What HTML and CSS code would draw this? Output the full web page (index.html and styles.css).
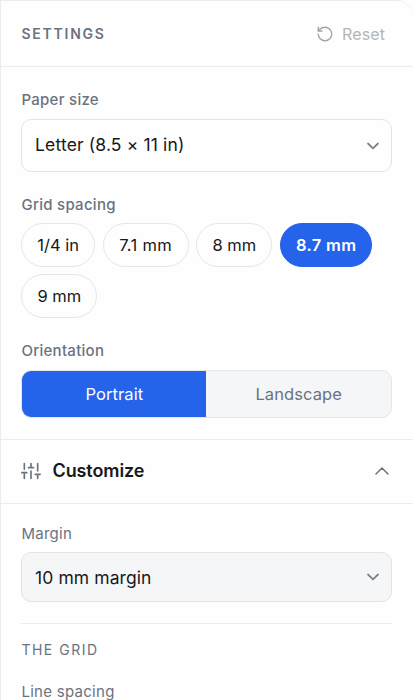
FILE: index.html
```html
<!DOCTYPE html>
<html lang="en">
<head>
<meta charset="utf-8">
<title>Settings</title>
<link rel="stylesheet" href="styles.css">
</head>
<body>
<aside class="panel">
  <header class="panel-header">
    <h2 class="panel-title">SETTINGS</h2>
    <button class="reset" type="button">
      <svg class="reset-icon" viewBox="0 0 24 24"><path d="M3 12a9 9 0 1 0 9-9 9.75 9.75 0 0 0-6.74 2.74L3 8"/><path d="M3 3v5h5"/></svg>
      <span>Reset</span>
    </button>
  </header>
  <section class="basics">
    <div class="label">Paper size</div>
    <div class="select select-paper"><span class="paper-value">Letter (8.5 × 11 in)</span>
      <svg class="chevron" viewBox="0 0 12 8"><path d="M1 1.5 6 6.3 11 1.5"/></svg>
    </div>
    <div class="label">Grid spacing</div>
    <div class="chips">
      <button class="chip chip-quarter" type="button">1/4 in</button>
      <button class="chip chip-71" type="button">7.1 mm</button>
      <button class="chip chip-8" type="button">8 mm</button>
      <button class="chip chip-active" type="button">8.7 mm</button>
      <button class="chip chip-9" type="button">9 mm</button>
    </div>
    <div class="label">Orientation</div>
    <div class="segments">
      <button class="segment segment-active" type="button">Portrait</button>
      <button class="segment" type="button">Landscape</button>
    </div>
  </section>
  <div class="customize">
    <svg class="sliders" viewBox="0 0 24 24"><path d="M4 21v-7M4 10V3M12 21v-9M12 8V3M20 21v-5M20 12V3M1 14h6M9 8h6M17 16h6"/></svg>
    <h3 class="customize-title">Customize</h3>
    <svg class="caret" viewBox="0 0 14 8"><path d="M1 7 7 1l6 6"/></svg>
  </div>
  <section class="details">
    <div class="label label-light">Margin</div>
    <div class="select select-margin"><span class="margin-value">10 mm margin</span>
      <svg class="chevron" viewBox="0 0 12 8"><path d="M1 1.5 6 6.3 11 1.5"/></svg>
    </div>
    <h4 class="group-title">THE GRID</h4>
    <div class="label label-light">Line spacing</div>
  </section>
</aside>
</body>
</html>
```
FILE: styles.css
```css
* { box-sizing: border-box; }
html, body { margin: 0; height: 700px; overflow: hidden; background: #fefefe; }
body { font-family: Inter, "Liberation Sans", sans-serif; color: #18181b; }
button { font: inherit; margin: 0; cursor: pointer; }
h2, h3, h4 { margin: 0; }
svg { fill: none; stroke: currentColor; stroke-linecap: round; stroke-linejoin: round; flex: none; }

.panel {
  height: 700px;
  overflow: hidden;
  border: 1px solid #ececee;
  border-right: 0;
  border-bottom: 0;
  border-top-right-radius: 16px;
  background: #fefefe;
}
.panel-header {
  height: 66px;
  padding: 0 28px 0 20.5px;
  display: flex;
  align-items: center;
  justify-content: space-between;
  border-bottom: 1px solid #ececee;
}
.panel-title { font-size: 14px; font-weight: 600; letter-spacing: 1.75px; color: #6b7280; }
.reset {
  display: flex;
  align-items: center;
  gap: 8px;
  padding: 0;
  border: 0;
  background: none;
  font-size: 16px;
  letter-spacing: .1px;
  color: #b4b5b9;
}
.reset-icon { width: 18px; height: 18px; stroke-width: 1.8; color: #a3a4a6; }

.basics { height: 372px; padding: 23px 21px 0 20.4px; }
.label { height: 20px; line-height: 20px; font-size: 15px; font-weight: 500; letter-spacing: .28px; color: #6b7280; }
.label-light { font-weight: 400; }
.select {
  display: flex;
  align-items: center;
  justify-content: space-between;
  padding: 0 12.5px 0 12.7px;
  border: 1px solid #e4e4e7;
  border-radius: 10px;
  font-size: 17.5px;
}
.paper-value { padding-bottom: 2px; letter-spacing: .15px; }
.margin-value { letter-spacing: .08px; }
.chevron { width: 12px; height: 8px; stroke-width: 1.8; color: #7c818a; }
.select-paper { height: 53px; margin: 9px 0 23px; }
.chips { display: flex; flex-wrap: wrap; gap: 7px 7.7px; margin: 8px 0 23px; }
.chip {
  height: 44px;
  padding: 0;
  border: 1px solid #e6e6e9;
  border-radius: 22px;
  background: #fefefe;
  color: #18181b;
  font-size: 16.5px;
}
.chip-quarter { width: 73.5px; }
.chip-71 { width: 86px; letter-spacing: .3px; }
.chip-8, .chip-9 { width: 76px; }
.chip-active { width: 92.5px; background: #2563eb; border-color: #2563eb; color: #fff; font-weight: 600; letter-spacing: .3px; }
.segments {
  display: flex;
  height: 48px;
  margin-top: 9px;
  border: 1px solid #e4e6ea;
  border-radius: 10px;
  overflow: hidden;
  background: #f5f6f8;
}
.segment { flex: 1; border: 0; padding: 0 0 1px; background: none; color: #6b7280; font-size: 16.5px; letter-spacing: .1px; }
.segment-active { flex: 0 0 184px; background: #2563eb; color: #fff; }

.customize {
  height: 65px;
  display: flex;
  align-items: center;
  padding: 0 24px 2px 20px;
  border-top: 1px solid #ececee;
  border-bottom: 1px solid #ececee;
}
.sliders { width: 20px; height: 20px; stroke-width: 2; color: #6b7280; }
.customize-title { margin-left: 11.5px; font-size: 18px; font-weight: 600; letter-spacing: -.1px; }
.caret { width: 14px; height: 8px; margin-left: auto; stroke-width: 1.5; color: #6b7280; }

.details { padding: 20px 21px 0 20.4px; }
.select-margin { height: 50px; margin: 8px 0 21px; background: #f5f6f8; }
.group-title {
  height: 59px;
  padding-top: 16px;
  border-top: 1px solid #ececee;
  font-size: 14px;
  line-height: 20px;
  font-weight: 400;
  letter-spacing: 1.5px;
  color: #6b7280;
}
```
